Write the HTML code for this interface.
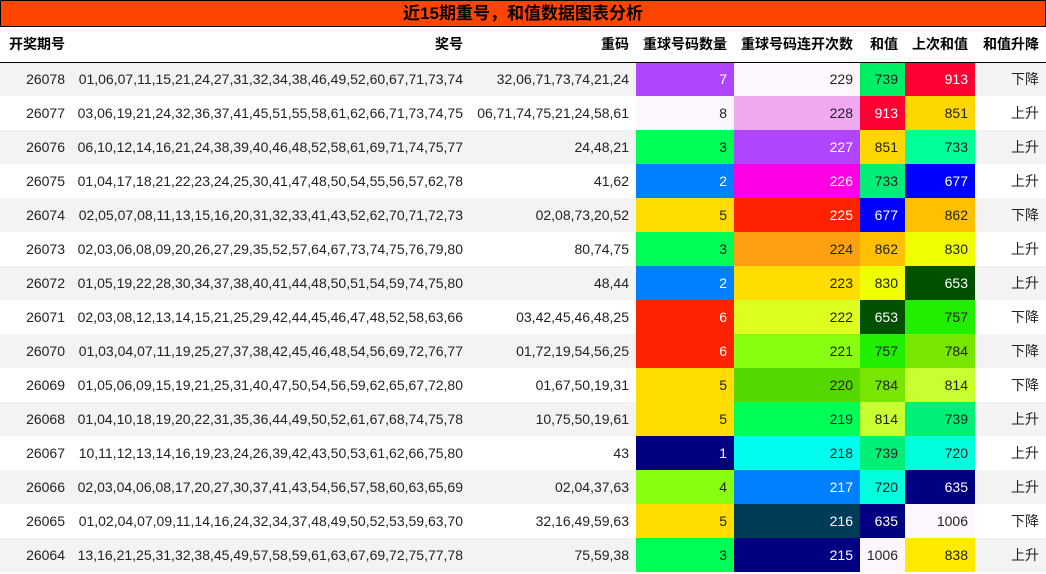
<!DOCTYPE html>
<html><head><meta charset="utf-8"><style>
*{margin:0;padding:0;box-sizing:border-box}
body{width:1046px;height:574px;background:#fff;font-family:"Liberation Sans","Noto Sans CJK SC",sans-serif;color:#222;overflow:hidden}
.t{height:27px;background:#ff4500;border:1px solid #000;text-align:center;font-weight:bold;font-size:17px;line-height:25px;color:#000}
table{border-collapse:collapse;table-layout:fixed;width:1046px;font-size:14px}
th{height:35px;font-weight:bold;color:#000;text-align:right;padding:0 7px 0 0;border-bottom:1px solid #000}
td{height:34px;text-align:right;padding:0 7px 0 0;white-space:nowrap}
tr:nth-child(even) td{background:#f3f3f3}
tr td.c{background:var(--b)!important}
.w{color:#fff}
</style></head><body>
<div class="t">近15期重号，和值数据图表分析</div>
<table>
<colgroup><col style="width:72px"><col style="width:398px"><col style="width:166px"><col style="width:98px"><col style="width:126px"><col style="width:45px"><col style="width:70px"><col style="width:71px"></colgroup>
<tr><th>开奖期号</th><th>奖号</th><th>重码</th><th>重球号码数量</th><th>重球号码连开次数</th><th>和值</th><th>上次和值</th><th>和值升降</th></tr>
<tr><td>26078</td><td>01,06,07,11,15,21,24,27,31,32,34,38,46,49,52,60,67,71,73,74</td><td>32,06,71,73,74,21,24</td><td class="c w" style="--b:#b044ff">7</td><td class="c" style="--b:#fdf6fc">229</td><td class="c" style="--b:#00ee66">739</td><td class="c w" style="--b:#ff0033">913</td><td>下降</td></tr>
<tr><td>26077</td><td>03,06,19,21,24,32,36,37,41,45,51,55,58,61,62,66,71,73,74,75</td><td>06,71,74,75,21,24,58,61</td><td class="c" style="--b:#fdf6fc">8</td><td class="c" style="--b:#f0a8f0">228</td><td class="c w" style="--b:#ff0033">913</td><td class="c" style="--b:#ffd700">851</td><td>上升</td></tr>
<tr><td>26076</td><td>06,10,12,14,16,21,24,38,39,40,46,48,52,58,61,69,71,74,75,77</td><td>24,48,21</td><td class="c" style="--b:#00ff55">3</td><td class="c w" style="--b:#b044ff">227</td><td class="c" style="--b:#ffd700">851</td><td class="c" style="--b:#00ff99">733</td><td>上升</td></tr>
<tr><td>26075</td><td>01,04,17,18,21,22,23,24,25,30,41,47,48,50,54,55,56,57,62,78</td><td>41,62</td><td class="c w" style="--b:#0080ff">2</td><td class="c w" style="--b:#ff00e6">226</td><td class="c" style="--b:#00ee77">733</td><td class="c w" style="--b:#0000ff">677</td><td>上升</td></tr>
<tr><td>26074</td><td>02,05,07,08,11,13,15,16,20,31,32,33,41,43,52,62,70,71,72,73</td><td>02,08,73,20,52</td><td class="c" style="--b:#ffdd00">5</td><td class="c w" style="--b:#ff2200">225</td><td class="c w" style="--b:#0000ff">677</td><td class="c" style="--b:#ffc000">862</td><td>下降</td></tr>
<tr><td>26073</td><td>02,03,06,08,09,20,26,27,29,35,52,57,64,67,73,74,75,76,79,80</td><td>80,74,75</td><td class="c" style="--b:#00ff55">3</td><td class="c" style="--b:#ffa010">224</td><td class="c" style="--b:#ffc000">862</td><td class="c" style="--b:#f0ff00">830</td><td>上升</td></tr>
<tr><td>26072</td><td>01,05,19,22,28,30,34,37,38,40,41,44,48,50,51,54,59,74,75,80</td><td>48,44</td><td class="c w" style="--b:#0080ff">2</td><td class="c" style="--b:#ffdd00">223</td><td class="c" style="--b:#f0ff00">830</td><td class="c w" style="--b:#005000">653</td><td>上升</td></tr>
<tr><td>26071</td><td>02,03,08,12,13,14,15,21,25,29,42,44,45,46,47,48,52,58,63,66</td><td>03,42,45,46,48,25</td><td class="c w" style="--b:#ff2200">6</td><td class="c" style="--b:#ddff20">222</td><td class="c w" style="--b:#005000">653</td><td class="c" style="--b:#22ee00">757</td><td>下降</td></tr>
<tr><td>26070</td><td>01,03,04,07,11,19,25,27,37,38,42,45,46,48,54,56,69,72,76,77</td><td>01,72,19,54,56,25</td><td class="c w" style="--b:#ff2200">6</td><td class="c" style="--b:#88ff10">221</td><td class="c" style="--b:#22ee00">757</td><td class="c" style="--b:#77e600">784</td><td>下降</td></tr>
<tr><td>26069</td><td>01,05,06,09,15,19,21,25,31,40,47,50,54,56,59,62,65,67,72,80</td><td>01,67,50,19,31</td><td class="c" style="--b:#ffdd00">5</td><td class="c" style="--b:#55d800">220</td><td class="c" style="--b:#77e600">784</td><td class="c" style="--b:#c8ff30">814</td><td>下降</td></tr>
<tr><td>26068</td><td>01,04,10,18,19,20,22,31,35,36,44,49,50,52,61,67,68,74,75,78</td><td>10,75,50,19,61</td><td class="c" style="--b:#ffdd00">5</td><td class="c" style="--b:#00ff55">219</td><td class="c" style="--b:#c8ff30">814</td><td class="c" style="--b:#00f077">739</td><td>上升</td></tr>
<tr><td>26067</td><td>10,11,12,13,14,16,19,23,24,26,39,42,43,50,53,61,62,66,75,80</td><td>43</td><td class="c w" style="--b:#000080">1</td><td class="c" style="--b:#00fcee">218</td><td class="c" style="--b:#00f077">739</td><td class="c" style="--b:#00ffdd">720</td><td>上升</td></tr>
<tr><td>26066</td><td>02,03,04,06,08,17,20,27,30,37,41,43,54,56,57,58,60,63,65,69</td><td>02,04,37,63</td><td class="c" style="--b:#88ff11">4</td><td class="c w" style="--b:#0080ff">217</td><td class="c" style="--b:#00ffdd">720</td><td class="c w" style="--b:#000080">635</td><td>上升</td></tr>
<tr><td>26065</td><td>01,02,04,07,09,11,14,16,24,32,34,37,48,49,50,52,53,59,63,70</td><td>32,16,49,59,63</td><td class="c" style="--b:#ffdd00">5</td><td class="c w" style="--b:#003c58">216</td><td class="c w" style="--b:#000080">635</td><td class="c" style="--b:#fdf6fc">1006</td><td>下降</td></tr>
<tr><td>26064</td><td>13,16,21,25,31,32,38,45,49,57,58,59,61,63,67,69,72,75,77,78</td><td>75,59,38</td><td class="c" style="--b:#00ff55">3</td><td class="c w" style="--b:#000080">215</td><td class="c" style="--b:#fdf6fc">1006</td><td class="c" style="--b:#ffea00">838</td><td>上升</td></tr>
</table>
</body></html>
